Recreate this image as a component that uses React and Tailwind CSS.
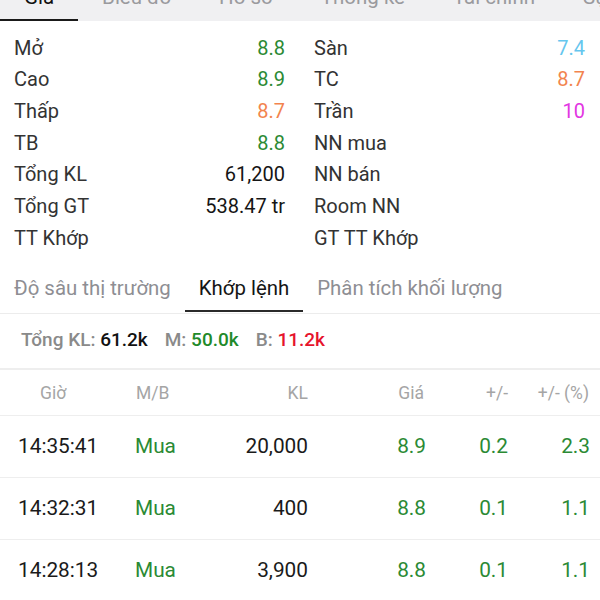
import React from 'react';

const GREEN = 'text-[#2b8a34]';

const topTabs = ['Giá', 'Biểu đồ', 'Hồ sơ', 'Thống kê', 'Tài chính', 'Sự kiện'];

const leftInfo = [
  { label: 'Mở', value: '8.8', color: GREEN },
  { label: 'Cao', value: '8.9', color: GREEN },
  { label: 'Thấp', value: '8.7', color: 'text-[#f2844e]' },
  { label: 'TB', value: '8.8', color: GREEN },
  { label: 'Tổng KL', value: '61,200', color: 'text-[#151515]' },
  { label: 'Tổng GT', value: '538.47 tr', color: 'text-[#151515]' },
  { label: 'TT Khớp', value: '', color: '' },
];

const rightInfo = [
  { label: 'Sàn', value: '7.4', color: 'text-[#66c6ee]' },
  { label: 'TC', value: '8.7', color: 'text-[#f2844e]' },
  { label: 'Trần', value: '10', color: 'text-[#e236e2]' },
  { label: 'NN mua', value: '', color: '' },
  { label: 'NN bán', value: '', color: '' },
  { label: 'Room NN', value: '', color: '' },
  { label: 'GT TT Khớp', value: '', color: '' },
];

const trades = [
  { time: '14:35:41', side: 'Mua', vol: '20,000', price: '8.9', change: '0.2', pct: '2.3' },
  { time: '14:32:31', side: 'Mua', vol: '400', price: '8.8', change: '0.1', pct: '1.1' },
  { time: '14:28:13', side: 'Mua', vol: '3,900', price: '8.8', change: '0.1', pct: '1.1' },
];

function InfoColumn({ rows }) {
  return (
    <div className="w-1/2 pl-[14px] pr-[15px]">
      {rows.map((r) => (
        <div key={r.label} className="h-[31.67px] flex items-center justify-between text-[20px] leading-[24px]">
          <span className="text-[#333333]">{r.label}</span>
          <span className={r.color}>{r.value}</span>
        </div>
      ))}
    </div>
  );
}

export default function App() {
  return (
    <div className="w-[600px] h-[600px] overflow-hidden bg-white font-['Roboto',sans-serif]">
      {/* top tab bar, scrolled partly out of view */}
      <div className="-mt-[26px] h-[47px] bg-[#f0f0f2] flex overflow-hidden whitespace-nowrap">
        {topTabs.map((t, i) => (
          <div
            key={t}
            className={`px-6 flex items-center h-full border-b-2 text-[20.5px] leading-[24px] ${
              i === 0 ? 'border-[#1a1a1a] text-[#111111]' : 'border-transparent text-[#9a9a9e]'
            }`}
          >
            {t}
          </div>
        ))}
      </div>

      {/* price info */}
      <div className="flex pt-[11px]">
        <InfoColumn rows={leftInfo} />
        <InfoColumn rows={rightInfo} />
      </div>

      {/* sub tabs */}
      <div className="flex pb-[1px] border-b border-[#ececec] whitespace-nowrap">
        {['Độ sâu thị trường', 'Khớp lệnh', 'Phân tích khối lượng'].map((t, i) => (
          <div
            key={t}
            className={`px-[14px] pt-[22px] pb-[10px] border-b-2 text-[20.4px] leading-[24px] ${
              i === 1 ? 'border-[#2a2a2a] text-[#151515]' : 'border-transparent text-[#8e8e93]'
            }`}
          >
            {t}
          </div>
        ))}
      </div>

      {/* summary */}
      <div className="h-[56px] flex items-center px-[21px] gap-[17px] text-[19px] font-medium border-b-2 border-[#eeeeee]">
        <span className="text-[#8a8a8a]">
          Tổng KL: <span className="text-[#111111]">61.2k</span>
        </span>
        <span className="text-[#8a8a8a]">
          M: <span className="text-[#1f8a2a]">50.0k</span>
        </span>
        <span className="text-[#8a8a8a]">
          B: <span className="text-[#e6132c]">11.2k</span>
        </span>
      </div>

      {/* table header */}
      <div className="h-[46px] pt-[3px] flex items-center text-[17.5px] text-[#a5a5a5] border-b border-[#eeeeee]">
        <div className="w-[134px] pl-[40px]">Giờ</div>
        <div className="w-[90px] pl-[2px]">M/B</div>
        <div className="w-[84px] text-right">KL</div>
        <div className="w-[116px] text-right">Giá</div>
        <div className="w-[84px] text-right">+/-</div>
        <div className="w-[81px] text-right">+/- (%)</div>
      </div>

      {/* trades */}
      {trades.map((t) => (
        <div key={t.time} className="h-[62px] flex items-center text-[20.8px] border-b border-[#eeeeee]">
          <div className="w-[134px] pl-[18px] text-[#1a1a1a]">{t.time}</div>
          <div className={`w-[90px] pl-[1px] ${GREEN}`}>{t.side}</div>
          <div className="w-[84px] text-right text-[#1a1a1a]">{t.vol}</div>
          <div className={`w-[118px] text-right ${GREEN}`}>{t.price}</div>
          <div className={`w-[82px] text-right ${GREEN}`}>{t.change}</div>
          <div className={`w-[82px] text-right ${GREEN}`}>{t.pct}</div>
        </div>
      ))}
    </div>
  );
}
